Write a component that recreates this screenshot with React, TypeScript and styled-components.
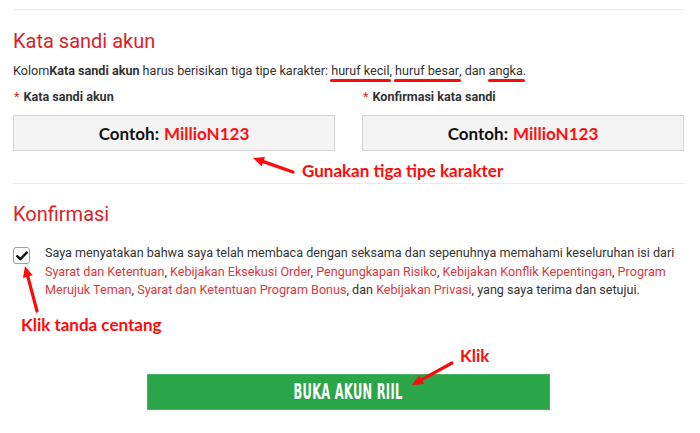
import React from "react";
import styled, { createGlobalStyle } from "styled-components";

const GlobalStyle = createGlobalStyle`
  html, body { margin: 0; padding: 0; background: #ffffff; }
  body { font-family: Roboto, "Noto Sans", Arial, sans-serif; color: #333; }
  * { box-sizing: border-box; }
`;

const RED = "#d9232b";
const LINK = "#d93a40";
const NOTE = "#ff0a0a";

const Page = styled.div`
  position: relative;
  width: 700px;
  height: 433px;
  overflow: hidden;
  padding: 9px 16px 0 13px;
`;

const Divider = styled.div<{ $mt?: number }>`
  height: 1px;
  background: #ebebeb;
  margin-top: ${(p) => p.$mt ?? 0}px;
`;

const SectionTitle = styled.h2<{ $mt: number }>`
  margin: ${(p) => p.$mt}px 0 0;
  font-family: Roboto, sans-serif;
  font-weight: 400;
  font-size: 20px;
  line-height: 24px;
  color: ${RED};
`;

const Desc = styled.p`
  margin: 9px 0 0;
  font-size: 12.6px;
  line-height: 18px;
  color: #333;
`;

const Mark = styled.span`
  position: relative;
  &::after {
    content: "";
    position: absolute;
    left: -1px;
    right: -2px;
    bottom: -4px;
    height: 3px;
    border-radius: 2px;
    background: ${NOTE};
  }
`;

const FieldRow = styled.div`
  display: grid;
  grid-template-columns: 322px 322px;
  column-gap: 27px;
  margin-top: 8px;
`;

const Field = styled.div`
  display: flex;
  flex-direction: column;
`;

const Label = styled.label`
  font-size: 12.6px;
  line-height: 18px;
  font-weight: 700;
  color: #333;
  padding-left: 1px;
`;

const Star = styled.span`
  color: ${RED};
  font-weight: 400;
  margin-right: 4px;
`;

const InputBox = styled.div`
  margin-top: 9px;
  height: 36px;
  border: 1px solid #d5d5d5;
  background: #f4f4f4;
  display: flex;
  align-items: center;
  justify-content: center;
  font-family: Lato, "Open Sans", sans-serif;
  font-weight: 700;
  font-size: 17px;
  color: #111;
`;

const Example = styled.span`
  color: #ff1010;
  margin-left: 5px;
`;

const CheckRow = styled.div`
  display: flex;
  align-items: flex-start;
  margin-top: 18px;
`;

const CheckBox = styled.span`
  flex: 0 0 auto;
  width: 17px;
  height: 17px;
  margin-top: 3px;
  border: 1px solid #a0a0a0;
  border-radius: 3px;
  background: #fff;
  display: flex;
  align-items: center;
  justify-content: center;
`;

const Agreement = styled.p`
  margin: 0 0 0 15px;
  font-size: 12.6px;
  line-height: 18.5px;
  color: #333;
`;

const DocLink = styled.a`
  color: ${LINK};
  text-decoration: none;
`;

const SubmitButton = styled.button`
  display: flex;
  align-items: center;
  justify-content: center;
  width: 403px;
  height: 36px;
  margin: 74px auto 0;
  border: 1px solid #48b264;
  background: #2aa548;
  cursor: pointer;
  padding: 0;
`;

const ButtonText = styled.span`
  display: inline-block;
  font-family: "DejaVu Sans Condensed", "DejaVu Sans", sans-serif;
  font-weight: 700;
  font-size: 22px;
  line-height: 22px;
  color: #fff;
  transform: scaleX(0.58);
  white-space: nowrap;
  letter-spacing: 0.5px;
`;

const Note = styled.div<{ $x: number; $y: number }>`
  position: absolute;
  left: ${(p) => p.$x}px;
  top: ${(p) => p.$y}px;
  font-family: Lato, "Open Sans", sans-serif;
  font-weight: 700;
  font-size: 17px;
  line-height: 20px;
  color: ${NOTE};
  white-space: nowrap;
`;

const Overlay = styled.svg`
  position: absolute;
  left: 0;
  top: 0;
  pointer-events: none;
`;

function Arrow({ x1, y1, x2, y2 }: { x1: number; y1: number; x2: number; y2: number }) {
  const ang = Math.atan2(y2 - y1, x2 - x1);
  const len = 11;
  const w = 5;
  const bx = x2 - Math.cos(ang) * len;
  const by = y2 - Math.sin(ang) * len;
  const px = -Math.sin(ang) * w;
  const py = Math.cos(ang) * w;
  return (
    <g>
      <line x1={x1} y1={y1} x2={bx} y2={by} stroke={NOTE} strokeWidth={3.2} strokeLinecap="round" />
      <polygon points={`${x2},${y2} ${bx + px},${by + py} ${bx - px},${by - py}`} fill={NOTE} />
    </g>
  );
}

export default function App() {
  return (
    <>
      <GlobalStyle />
      <Page>
        <Divider />
        <SectionTitle $mt={19}>Kata sandi akun</SectionTitle>
        <Desc>
          Kolom<b>Kata sandi akun</b> harus berisikan tiga tipe karakter: <Mark>huruf kecil</Mark>,{" "}
          <Mark>huruf besar</Mark>, dan <Mark>angka</Mark>.
        </Desc>
        <FieldRow>
          <Field>
            <Label>
              <Star>*</Star>Kata sandi akun
            </Label>
            <InputBox>
              Contoh:<Example>MillioN123</Example>
            </InputBox>
          </Field>
          <Field>
            <Label>
              <Star>*</Star>Konfirmasi kata sandi
            </Label>
            <InputBox>
              Contoh:<Example>MillioN123</Example>
            </InputBox>
          </Field>
        </FieldRow>
        <Divider $mt={32} />
        <SectionTitle $mt={18}>Konfirmasi</SectionTitle>
        <CheckRow>
          <CheckBox>
            <svg width="12" height="10" viewBox="0 0 12 10">
              <path d="M1.2 5.2 L4.3 8.2 L10.8 1.6" fill="none" stroke="#111" strokeWidth="2.4" strokeLinecap="round" strokeLinejoin="round" />
            </svg>
          </CheckBox>
          <Agreement>
            Saya menyatakan bahwa saya telah membaca dengan seksama dan sepenuhnya memahami keseluruhan isi dari{" "}
            <DocLink>Syarat dan Ketentuan</DocLink>, <DocLink>Kebijakan Eksekusi Order</DocLink>,{" "}
            <DocLink>Pengungkapan Risiko</DocLink>, <DocLink>Kebijakan Konflik Kepentingan</DocLink>,{" "}
            <DocLink>Program Merujuk Teman</DocLink>, <DocLink>Syarat dan Ketentuan Program Bonus</DocLink>, dan{" "}
            <DocLink>Kebijakan Privasi</DocLink>, yang saya terima dan setujui.
          </Agreement>
        </CheckRow>
        <SubmitButton>
          <ButtonText>BUKA AKUN RIIL</ButtonText>
        </SubmitButton>

        <Note $x={302} $y={161}>Gunakan tiga tipe karakter</Note>
        <Note $x={21} $y={315}>Klik tanda centang</Note>
        <Note $x={460} $y={346}>Klik</Note>
        <Overlay width="700" height="433" viewBox="0 0 700 433">
          <Arrow x1={293} y1={172} x2={253} y2={158} />
          <Arrow x1={37} y1={311} x2={25} y2={266} />
          <Arrow x1={452} y1={363} x2={412} y2={385} />
        </Overlay>
      </Page>
    </>
  );
}
